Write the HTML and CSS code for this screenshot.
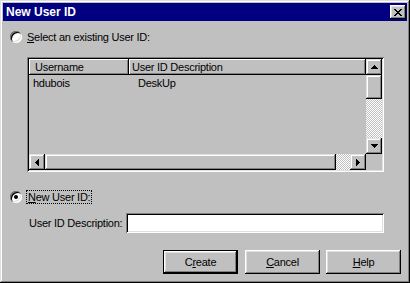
FILE: index.html
```html
<!DOCTYPE html>
<html>
<head>
	<meta charset="UTF-8">
	<title>New User ID</title>
	<link rel="stylesheet" href="styles.css">
</head>
<body>
	<div class="window">
		<!-- 标题栏 -->
		<div class="titlebar">
			<span class="title">New User ID</span>
			<button class="close">
				<svg width="8" height="7" viewBox="0 0 8 7" shape-rendering="crispEdges"><path d="M0 0h2v1h-2zM6 0h2v1h-2zM1 1h2v1h-2zM5 1h2v1h-2zM2 2h4v1h-4zM3 3h2v1h-2zM2 4h4v1h-4zM1 5h2v1h-2zM5 5h2v1h-2zM0 6h2v1h-2zM6 6h2v1h-2z" fill="#000"/></svg>
			</button>
		</div>
		<div class="body">
			<div class="option first">
				<span class="radio"></span>
				<span class="label"><u>S</u>elect an existing User ID:</span>
			</div>
			<!-- 用户列表 -->
			<div class="listview">
				<div class="list-main">
					<div class="header">
						<div class="hcell col1">Username</div>
						<div class="hcell col2">User ID Description</div>
					</div>
					<div class="row">
						<div class="cell col1">hdubois</div>
						<div class="cell col2">DeskUp</div>
					</div>
				</div>
				<div class="vscroll">
					<div class="sbtn"><svg width="7" height="4" viewBox="0 0 7 4" shape-rendering="crispEdges"><path d="M3 0h1v1h-1zM2 1h3v1h-3zM1 2h5v1h-5zM0 3h7v1h-7z"/></svg></div>
					<div class="sbtn vthumb"></div>
					<div class="track"></div>
					<div class="sbtn"><svg width="7" height="4" viewBox="0 0 7 4" shape-rendering="crispEdges"><path d="M0 0h7v1h-7zM1 1h5v1h-5zM2 2h3v1h-3zM3 3h1v1h-1z"/></svg></div>
				</div>
				<div class="hscroll">
					<div class="sbtn"><svg width="4" height="7" viewBox="0 0 4 7" shape-rendering="crispEdges"><path d="M0 3h1v1h-1zM1 2h1v3h-1zM2 1h1v5h-1zM3 0h1v7h-1z"/></svg></div>
					<div class="sbtn hthumb"></div>
					<div class="track"></div>
					<div class="sbtn"><svg width="4" height="7" viewBox="0 0 4 7" shape-rendering="crispEdges"><path d="M0 0h1v7h-1zM1 1h1v5h-1zM2 2h1v3h-1zM3 3h1v1h-1z"/></svg></div>
				</div>
				<div class="corner"></div>
			</div>
			<div class="option second">
				<span class="radio checked"></span>
				<span class="label focus"><u>N</u>ew User ID:</span>
			</div>
			<div class="desc">
				<span class="desc-label">User ID Description:</span>
				<input type="text" class="field">
			</div>
			<div class="buttons">
				<button class="btn default">C<u>r</u>eate</button>
				<button class="btn"><u>C</u>ancel</button>
				<button class="btn"><u>H</u>elp</button>
			</div>
		</div>
	</div>
</body>
</html>
```
FILE: styles.css
```css
body{margin:0;padding:0;font-family:"Liberation Sans",Arial,sans-serif;font-size:11px;letter-spacing:-0.25px;color:#000;}
.window{width:410px;height:283px;box-sizing:border-box;padding:3px;background:#c0c0c0;box-shadow:inset -1px -1px #000,inset 1px 1px #dfdfdf,inset -2px -2px #808080,inset 2px 2px #fff;}
.titlebar{height:18px;background:#000080;display:flex;align-items:center;justify-content:space-between;padding:0 1px 0 3px;}
.title{color:#fff;font-weight:bold;font-size:12px;letter-spacing:0;}
.close{width:16px;height:14px;padding:0 1px 0 0;border:0;background:#c0c0c0;display:flex;align-items:center;justify-content:center;box-shadow:inset -1px -1px #000,inset 1px 1px #fff,inset -2px -2px #808080,inset 2px 2px #dfdfdf;}
.body{padding-left:7px;}
.option{display:flex;align-items:center;height:12px;gap:5px;}
.option.first{margin-top:10px;}
.option.second{margin-top:19px;}
.radio{width:12px;height:12px;border-radius:50%;background:#fff;position:relative;box-shadow:inset 1px 1px #808080,inset -1px -1px #fff,inset 2px 2px #000,inset -2px -2px #dfdfdf;}
.radio.checked::after{content:"";position:absolute;left:4px;top:4px;width:4px;height:4px;border-radius:50%;background:#000;}
.label{line-height:12px;}
.focus{outline:1px dotted #000;padding:0 1px;}
.listview{margin:14px 0 0 17px;width:357px;height:115px;box-sizing:border-box;padding:2px;background:#c0c0c0;display:grid;grid-template-columns:1fr 16px;grid-template-rows:1fr 16px;box-shadow:inset 1px 1px #808080,inset -1px -1px #fff,inset 2px 2px #000,inset -2px -2px #dfdfdf;}
.list-main{overflow:hidden;}
.header,.row{display:flex;height:16px;line-height:16px;}
.hcell{box-sizing:border-box;background:#c0c0c0;box-shadow:inset -1px -1px #000,inset 1px 1px #fff,inset -2px -2px #808080;}
.col1{width:100px;flex:none;}
.col2{flex:1;}
.hcell.col1{padding-left:6px;}
.hcell.col2{padding-left:3px;}
.cell.col1{padding-left:4px;}
.cell.col2{padding-left:5px;}
.vscroll{display:flex;flex-direction:column;}
.hscroll{display:flex;}
.sbtn{width:16px;height:16px;flex:none;box-sizing:border-box;background:#c0c0c0;display:flex;align-items:center;justify-content:center;box-shadow:inset -1px -1px #000,inset 1px 1px #dfdfdf,inset -2px -2px #808080,inset 2px 2px #fff;}
.vthumb{height:24px;}
.hthumb{width:291px;}
.track{flex:1;background:repeating-conic-gradient(#fff 0 25%,#c0c0c0 0 50%) 0 0/2px 2px;}
.corner{background:#c0c0c0;}
.desc{display:flex;align-items:center;margin-top:10px;padding-left:19px;height:20px;}
.desc-label{width:97px;flex:none;}
.field{width:258px;height:20px;box-sizing:border-box;border:0;padding:2px 4px;background:#fff;outline:none;box-shadow:inset 1px 1px #808080,inset -1px -1px #fff,inset 2px 2px #000,inset -2px -2px #dfdfdf;}
.buttons{display:flex;justify-content:flex-end;margin-top:17px;padding-right:6px;gap:6px;}
.btn{width:75px;height:24px;box-sizing:border-box;padding:0;border:0;background:#c0c0c0;font-family:inherit;font-size:11px;letter-spacing:-0.25px;color:#000;box-shadow:inset -1px -1px #000,inset 1px 1px #fff,inset -2px -2px #808080,inset 2px 2px #dfdfdf;}
.btn.default{border:1px solid #000;margin-right:1px;}
```
